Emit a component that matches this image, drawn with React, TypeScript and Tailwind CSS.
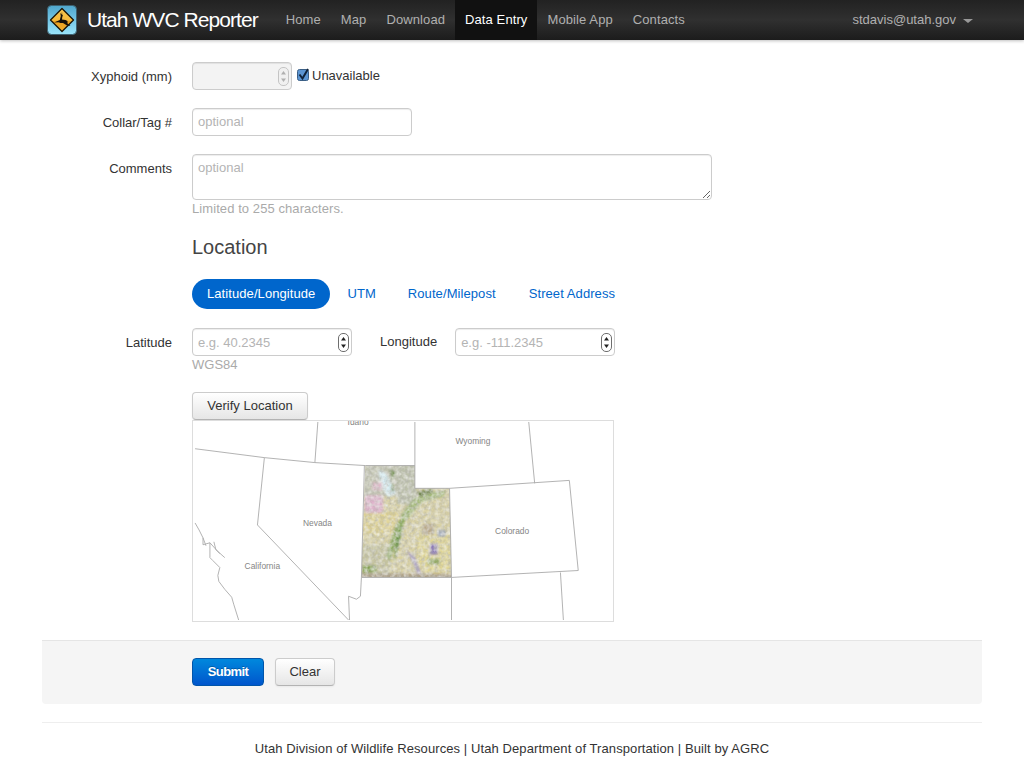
import type { ReactNode } from "react";

const navItems = ["Home", "Map", "Download", "Data Entry", "Mobile App", "Contacts"];
const inputBase =
  "h-[28px] rounded-[4px] border border-[#ccc] px-[5px] text-[13px] text-[#555] shadow-[inset_0_1px_1px_rgba(0,0,0,0.075)] outline-none placeholder:text-[#b4b4b4]";
const greyButton =
  "h-[28px] rounded-[4px] border border-[#ccc] border-b-[#b3b3b3] bg-gradient-to-b from-white to-[#e6e6e6] text-[13px] text-[#333] shadow-[inset_0_1px_0_rgba(255,255,255,0.2),0_1px_2px_rgba(0,0,0,0.05)]";

function Logo() {
  return (
    <svg width="30" height="30" viewBox="0 0 30 30" className="shrink-0">
      <defs>
        <linearGradient id="sky" x1="0" y1="0" x2="0" y2="1">
          <stop offset="0" stopColor="#4fa6cc" />
          <stop offset="0.5" stopColor="#74c6e6" />
          <stop offset="1" stopColor="#9be5fa" />
        </linearGradient>
        <linearGradient id="sign" x1="0" y1="0" x2="0" y2="1">
          <stop offset="0" stopColor="#f8c64e" />
          <stop offset="0.52" stopColor="#f5ba3c" />
          <stop offset="0.53" stopColor="#e99f20" />
          <stop offset="1" stopColor="#f0ae2c" />
        </linearGradient>
      </defs>
      <rect x="0.5" y="0.5" width="29" height="29" rx="4" fill="url(#sky)" stroke="#3d6070" />
      <path d="M15 3.5 L26.5 15 L15 26.5 L3.5 15 Z" fill="url(#sign)" stroke="#1a1407" strokeWidth="1.3" strokeLinejoin="round" />
      <path
        d="M15 6.5 L14.6 9.5 L13.2 8 L13.8 11 L12.8 15 L7 17.5 L11.5 17.2 L13.5 18 L16 18 L20 20.5 L23.5 21 L20.5 18.5 L20.5 16 L18.5 15 L15 14.5 L15.3 11.5 L16 11 L15.2 9.5 Z"
        fill="#17120a"
      />
    </svg>
  );
}

function Spinner({ disabled = false, className }: { disabled?: boolean; className: string }) {
  const line = disabled ? "#c4c4c4" : "#6e6e6e";
  const arrow = disabled ? "#b0b0b0" : "#222";
  return (
    <svg width="11" height="19" viewBox="0 0 11 19" className={className}>
      <rect x="0.5" y="0.5" width="10" height="18" rx="4.5" fill={disabled ? "#f0f0f0" : "#fff"} stroke={line} />
      <path d="M5.5 4 L8 7.6 H3 Z" fill={arrow} />
      <path d="M5.5 15 L8 11.4 H3 Z" fill={arrow} />
    </svg>
  );
}

function Field({ label, children, labelClass = "" }: { label: string; children: ReactNode; labelClass?: string }) {
  return (
    <div className="flex items-start">
      <label className={`mr-[20px] w-[130px] pt-[6px] text-right text-[13px] leading-[18px] text-[#333] ${labelClass}`}>
        {label}
      </label>
      {children}
    </div>
  );
}

function MapPreview() {
  const lines = [
    "M1 28 L71 37 L122 42 L173 45 L223 45",
    "M125 1 L122 42",
    "M71 37 L64 105 L156 201",
    "M172 45 L169 158 L168 177 L164 180 L156 177 L157 201",
    "M1 103 L5 110 L9 118 L9 125 L16 123 L16 138 L19 141 L26 148 L24 156 L25 162 L31 170 L38 178 L40 185 L45 201",
    "M9 118 L12 126 M16 123 L26 134 M20 122 L22 130 L31 138",
    "M223 1 L223 68 L258 68",
    "M258 68 L379 60 L388 151 L260 158 L169 158",
    "M338 1 L344 63",
    "M258 68 L260 158 L260 201",
    "M370 153 L373 201",
  ];
  return (
    <svg width="422" height="202" viewBox="0 0 422 202" className="block border border-[#ddd] bg-white">
      <defs>
        <clipPath id="utah">
          <path d="M173 45 H223 V68 H258 L260 158 H169 Z" />
        </clipPath>
        <filter id="terrain" x="0" y="0" width="100%" height="100%">
          <feTurbulence type="fractalNoise" baseFrequency="0.3" numOctaves="3" seed="7" />
          <feColorMatrix values="0 0 0 0 0.45  0 0 0 0 0.45  0 0 0 0 0.42  0.9 0.9 0 0 -0.66" />
        </filter>
        <filter id="speck" x="0" y="0" width="100%" height="100%">
          <feTurbulence type="fractalNoise" baseFrequency="0.25" numOctaves="2" seed="21" />
          <feColorMatrix values="0 0 0 0 0.92  0 0 0 0 0.92  0 0 0 0 0.9  0 0.9 0.9 0 -0.72" />
        </filter>
        <filter id="soft">
          <feGaussianBlur stdDeviation="1" />
        </filter>
      </defs>
      <g clipPath="url(#utah)">
        <rect x="165" y="40" width="100" height="125" fill="#d9d1a2" />
        <g filter="url(#soft)">
          <rect x="168" y="44" width="40" height="32" fill="#c4c6b2" />
          <rect x="205" y="44" width="20" height="40" fill="#bcc0aa" />
          <rect x="168" y="92" width="40" height="22" fill="#dfd290" />
          <rect x="225" y="115" width="35" height="40" fill="#e0d694" />
          <rect x="168" y="125" width="30" height="30" fill="#c6c49e" />
          <path d="M186 49 L194 53 L204 73 L196 77 L189 66 Z" fill="#d8eef4" />
          <rect x="172" y="75" width="19" height="18" rx="3" fill="#dfb2cb" />
          <rect x="180" y="62" width="10" height="8" fill="#dfb8c8" />
          <path d="M225 72 L240 68 L242 74 L228 78 Z" fill="#62793e" />
          <path d="M222 78 L240 72 L254 70 L252 76 L230 82 L215 100 L208 96 Z" fill="#a3b878" />
          <path d="M219 85 L210 108 L198 141 L194 137 L203 106 Z" fill="#8dab5e" />
          <path d="M212 100 L207 125 L202 143 L204 120 Z" fill="#618c40" />
          <path d="M197 48 L200 60 L204 52 Z" fill="#6b8844" />
          <path d="M200 62 L199 72 L202 70 Z" fill="#6b8844" />
          <path d="M214 130 L222 145 L226 157 L231 157 L223 137 Z" fill="#aaa0c4" />
          <rect x="238" y="124" width="8" height="11" fill="#8c7ab8" />
          <rect x="246" y="110" width="8" height="7" fill="#9aa4b8" />
          <rect x="231" y="104" width="11" height="11" fill="#b8a888" />
          <rect x="170" y="146" width="14" height="7" fill="#7f9f4c" />
          <rect x="236" y="139" width="12" height="6" fill="#8fa95c" />
          <rect x="165" y="154" width="100" height="5" fill="#ab9e84" />
        </g>
        <rect x="165" y="40" width="100" height="125" filter="url(#terrain)" />
        <rect x="165" y="40" width="100" height="125" filter="url(#speck)" />
      </g>
      <g fill="none" stroke="#aaa" strokeWidth="0.9">
        {lines.map((d) => (
          <path key={d} d={d} />
        ))}
      </g>
      <g fill="#858585" fontSize="8.5" fontFamily="'Liberation Sans', Arial, sans-serif">
        <text x="155" y="4">Idaho</text>
        <text x="264" y="23">Wyoming</text>
        <text x="110" y="106">Nevada</text>
        <text x="51" y="149">California</text>
        <text x="304" y="114">Colorado</text>
      </g>
    </svg>
  );
}

export default function App() {
  return (
    <div className="min-h-[768px] bg-white font-['Liberation_Sans',Arial,sans-serif] text-[13px] text-[#333]">
      <header className="flex h-[40px] items-stretch bg-gradient-to-b from-[#222] via-[#303030] to-[#1c1c1c] pl-[47px] pr-[51px] shadow-[0_1px_3px_rgba(0,0,0,0.25)]">
        <div className="mr-[18px] flex items-center gap-[10px]">
          <Logo />
          <span className="text-[21px] font-normal tracking-[-0.94px] text-white">Utah WVC Reporter</span>
        </div>
        <nav className="flex items-stretch tracking-[0.1px]">
          {navItems.map((item) =>
            item === "Data Entry" ? (
              <a key={item} className="flex items-center bg-[#111] px-[10px] font-normal text-white">
                {item}
              </a>
            ) : (
              <a key={item} className="flex items-center px-[10px] text-[#b0b0b0]">
                {item}
              </a>
            ),
          )}
        </nav>
        <div className="ml-auto flex items-center gap-[7px] text-[#b0b0b0]">
          stdavis@utah.gov
          <span className="mt-[1px] h-0 w-0 border-x-[5px] border-t-[4px] border-x-transparent border-t-[#999]" />
        </div>
      </header>

      <main className="px-[42px] pt-[22px]">
        <Field label="Xyphoid (mm)">
          <div className="relative">
            <input disabled className={`${inputBase} block w-[100px] bg-[#f3f3f3]`} />
            <Spinner disabled className="absolute right-[3px] top-[5px]" />
          </div>
          <label className="ml-[5px] flex h-[28px] items-center gap-[2px] text-[13px] text-[#333]">
            <svg width="13" height="14" viewBox="0 0 13 14" className="mt-[-2px]">
              <rect x="0.5" y="1.5" width="11" height="11" rx="2" fill="#5c95d2" stroke="#3b5f86" />
              <path d="M2.5 6.5 L5.5 10.5 L11 1" fill="none" stroke="#10233a" strokeWidth="2" />
            </svg>
            Unavailable
          </label>
        </Field>

        <div className="mt-[18px]">
          <Field label="Collar/Tag #">
            <input placeholder="optional" className={`${inputBase} block w-[220px] bg-white pb-[2px]`} />
          </Field>
        </div>

        <div className="mt-[18px]">
          <Field label="Comments">
            <div>
              <textarea placeholder="optional" className={`${inputBase} block h-[46px] w-[520px] resize-y bg-white pt-[3px]`} />
              <p className="leading-[18px] tracking-[0.08px] text-[#aaa]">Limited to 255 characters.</p>
            </div>
          </Field>
        </div>

        <div className="ml-[150px]">
          <h2 className="mt-[14px] text-[20px] leading-[30px] font-normal text-[#444]">Location</h2>
          <div className="mt-[17px] flex h-[30px] items-center tracking-[0.08px] text-[#0066cc]">
            <a className="flex h-[30px] items-center rounded-full bg-[#0066cc] px-[15px] text-white">Latitude/Longitude</a>
            <a className="ml-[17px]">UTM</a>
            <a className="ml-[32px]">Route/Milepost</a>
            <a className="ml-[33px]">Street Address</a>
          </div>
        </div>

        <div className="mt-[19px]">
          <Field label="Latitude">
            <div>
              <div className="relative">
                <input placeholder="e.g. 40.2345" className={`${inputBase} block w-[160px] bg-white`} />
                <Spinner className="absolute right-[3px] top-[5px]" />
              </div>
              <p className="leading-[18px] text-[#aaa]">WGS84</p>
            </div>
            <span className="ml-[28px] mr-[18px] pt-[5px] leading-[18px] text-[#333]">Longitude</span>
            <div className="relative h-[28px]">
              <input placeholder="e.g. -111.2345" className={`${inputBase} block w-[160px] bg-white`} />
              <Spinner className="absolute right-[3px] top-[5px]" />
            </div>
          </Field>
        </div>

        <div className="ml-[150px] mt-[18px]">
          <button className={`${greyButton} block w-[116px]`}>Verify Location</button>
          <MapPreview />
        </div>

        <div className="mt-[18px] flex h-[64px] items-center gap-[11px] rounded-b-[4px] border-t border-[#e5e5e5] bg-[#f5f5f5] pb-[1px] pl-[150px]">
          <button className="h-[28px] w-[72px] rounded-[4px] border border-[#0055aa] bg-gradient-to-b from-[#0088dd] to-[#0055cc] text-[13px] font-bold tracking-[-0.6px] text-white [text-shadow:0_-1px_0_rgba(0,0,0,0.25)]">
            Submit
          </button>
          <button className={`${greyButton} w-[60px]`}>Clear</button>
        </div>

        <footer className="mt-[18px] border-t border-[#eee] pt-[17px] text-center text-[13px] leading-[18px] tracking-[0.09px] text-[#333]">
          Utah Division of Wildlife Resources | Utah Department of Transportation | Built by AGRC
        </footer>
      </main>
    </div>
  );
}
